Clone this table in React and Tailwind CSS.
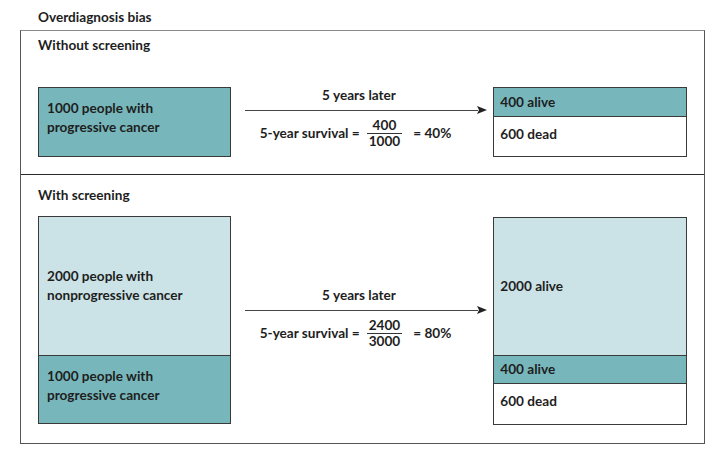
import React from 'react';

const font = { fontFamily: 'Lato, "Liberation Sans", sans-serif' };

const Arrow = ({ num, den, pct, className }) => (
  <div className={`flex w-[243px] flex-col ${className}`}>
    <div className="h-[18px] pr-[14px] text-center leading-[18px]">5 years later</div>
    {/* arrow line */}
    <div className="mt-[1px] flex h-[10px] items-center">
      <div className="h-px flex-1 bg-[#444]" />
      <svg width="10" height="8" viewBox="0 0 10 8" className="-ml-px">
        <path d="M0 0 L10 4 L0 8 L2 4 Z" fill="#222" />
      </svg>
    </div>
    <div className="mt-[3px] flex items-center pl-[15px]">
      <span>5-year survival =</span>
      <span className="ml-[7px] inline-flex flex-col items-center leading-[15px]">
        <span className="px-[2px]">{num}</span>
        <span className="h-px w-full bg-[#333]" />
        <span className="px-[2px]">{den}</span>
      </span>
      <span className="ml-[11px]">= {pct}</span>
    </div>
  </div>
);

export default function App() {
  return (
    <div className="min-h-[450px] bg-white pt-[8px] text-[13.6px] font-bold text-[#1e1e1e]" style={font}>
      <div className="h-[22px] pl-[38px] leading-[18px]">Overdiagnosis bias</div>

      <div className="ml-[20px] w-[685px] border border-[#555] border-t-[#8a8a8a]">
        {/* without screening */}
        <div className="border-b border-[#2a2a2a] px-[17px] pt-[5px] pb-[17px]">
          <div className="leading-[18px]">Without screening</div>
          <div className="mt-[33px] flex">
            <div className="flex h-[70px] w-[193px] items-center border border-[#3a3a3a] bg-[#77b7bc] pb-[8px] pl-[8px] leading-[19px]">
              <div>1000 people with<br />progressive cancer</div>
            </div>
            <Arrow num="400" den="1000" pct="40%" className="-mt-[1px] ml-[14px]" />
            <div className="ml-[6px] flex h-[70px] w-[194px] flex-col border border-[#3a3a3a]">
              <div className="flex h-[29px] items-center border-b border-[#3a3a3a] bg-[#77b7bc] pl-[6px]">400 alive</div>
              <div className="pl-[6px] pt-[8px] leading-[18px]">600 dead</div>
            </div>
          </div>
        </div>

        {/* with screening */}
        <div className="px-[17px] pt-[11px] pb-[18px]">
          <div className="leading-[18px]">With screening</div>
          <div className="mt-[12px] flex">
            <div className="flex h-[208px] w-[193px] flex-col border border-[#3a3a3a]">
              <div className="flex h-[138px] items-center bg-[#cbe3e6] pl-[8px] leading-[19px]">
                <div>2000 people with<br />nonprogressive cancer</div>
              </div>
              <div className="flex flex-1 items-center border-t border-[#3a3a3a] bg-[#77b7bc] pb-[8px] pl-[8px] leading-[19px]">
                <div>1000 people with<br />progressive cancer</div>
              </div>
            </div>
            <Arrow num="2400" den="3000" pct="80%" className="mt-[70px] ml-[14px]" />
            <div className="ml-[6px] mt-[1px] flex h-[208px] w-[194px] flex-col border border-[#3a3a3a]">
              <div className="flex h-[137px] items-center bg-[#cbe3e6] pl-[6px]">2000 alive</div>
              <div className="flex h-[29px] items-center border-y border-[#3a3a3a] bg-[#77b7bc] pl-[6px]">400 alive</div>
              <div className="pl-[6px] pt-[8px] leading-[18px]">600 dead</div>
            </div>
          </div>
        </div>
      </div>
    </div>
  );
}
